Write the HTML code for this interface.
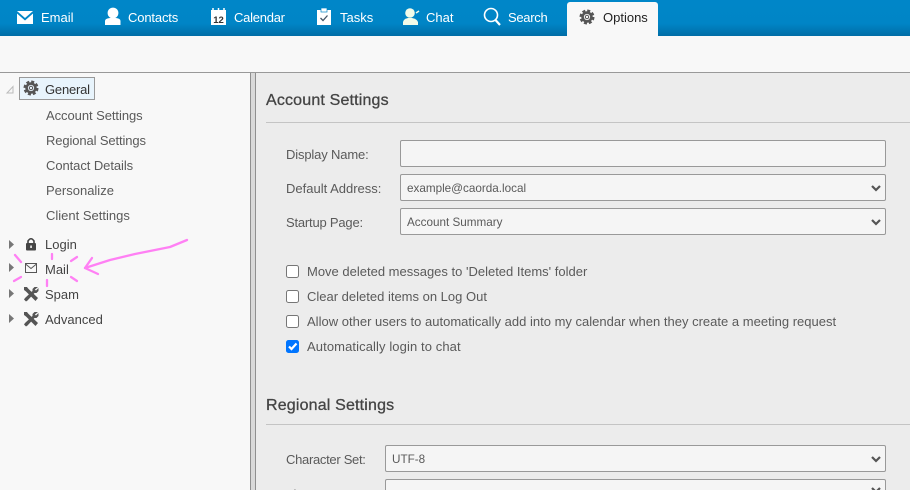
<!DOCTYPE html>
<html><head><meta charset="utf-8">
<style>
html,body{margin:0;padding:0;width:910px;height:490px;overflow:hidden;background:#f8f8f8}
body{position:relative;font-family:"Liberation Sans",sans-serif;font-size:13px;color:#5a5a5a}
.a{position:absolute}
.t{position:absolute;line-height:20px;white-space:nowrap}
.n{color:#fff;top:8px}
.h{font-size:16px;color:#444;-webkit-text-stroke:.3px #444;line-height:22px;letter-spacing:.17px}
.b{position:absolute;box-sizing:border-box;background:#f5f5f5;border:1px solid #999;border-radius:2px}
.c{position:absolute;left:286px;width:13px;height:13px;box-sizing:border-box;background:#fff;border:1px solid #767676;border-radius:2.5px}
.s{font-size:11.7px;color:#5a5a5a}
svg{position:absolute;left:0;top:0}
</style></head><body>
<div class="a" style="left:0;top:0;width:910px;height:36px;background:linear-gradient(#0086c8 0,#0085c6 65%,#006da6 100%)"></div>
<div class="a" style="left:567px;top:2px;width:91px;height:34px;background:#f8f8f8;border-radius:3px 3px 0 0"></div>
<div class="a" style="left:0;top:72px;width:910px;height:1px;background:#999"></div>
<div class="a" style="left:250px;top:73px;width:660px;height:417px;background:#ececec"></div>
<div class="a" style="left:250px;top:73px;width:6px;height:417px;box-sizing:border-box;background:#d9d9d9;border-left:1px solid #8f8f8f;border-right:1px solid #8f8f8f"></div>

<div class="t n" style="left:41px">Email</div>
<div class="t n" style="left:128px;letter-spacing:-.15px">Contacts</div>
<div class="t n" style="left:234px;letter-spacing:-.25px">Calendar</div>
<div class="t n" style="left:340px">Tasks</div>
<div class="t n" style="left:426px">Chat</div>
<div class="t n" style="left:508px;letter-spacing:-.3px">Search</div>
<div class="t" style="left:603px;top:8px;color:#222">Options</div>

<svg width="910" height="490" viewBox="0 0 910 490">
<defs>
<g id="gear"><circle r="6.3" fill="none" stroke="#555" stroke-width="2.4" stroke-dasharray="3 1.95"/><circle r="4.4" fill="none" stroke="#555" stroke-width="2.6"/><circle r="1.7" fill="none" stroke="#555" stroke-width="1"/></g>
<g id="tool" fill="#555"><path d="M1 3.5 L3.5 1 L15 12 L12.5 15 Z"/><path d="M1 1 L4 1 L6 4 L4 6 L1 4 Z"/><path d="M15 1 L11.5 1 L9.5 3 L9.5 5 L2 12 L1 13.5 L3 15.5 L4.5 14.5 L11.5 7 L13.500 7 L15.500 5 L15.500 2 L13 4.500 L11.800 3.600 Z"/></g>
<path id="ar" d="M0 0 L5 4.500 L0 9 Z" fill="#777"/>
</defs>
<!-- email -->
<path d="M17 11 L33 11 L25 18 Z" fill="#fff"/><path d="M17 13.500 L25 20.500 L33 13.500 L33 24 L17 24 Z" fill="#fff"/>
<!-- contacts -->
<circle cx="113" cy="13" r="5.400" fill="#fff"/><path d="M105 25 L105 21 Q105 18.500 110 18 L116 18 Q120.500 18.500 120.500 21 L120.500 25 Z" fill="#fff"/>
<!-- calendar -->
<rect x="211" y="10" width="15" height="15" fill="#fff"/><path d="M213 8v4M218.500 8v4M224 8v4" stroke="#fff" stroke-width="1.500"/>
<text x="218.500" y="23" font-family="Liberation Sans" font-size="9.500" font-weight="bold" text-anchor="middle" fill="#333">12</text>
<!-- tasks -->
<rect x="317" y="10" width="14" height="15" fill="#fff"/><rect x="321" y="8" width="6" height="4" fill="#fff" stroke="#0085c6" stroke-width=".7"/><path d="M320.500 18 L323 20.500 L327.500 15.500" fill="none" stroke="#456" stroke-width="1.300"/>
<!-- chat -->
<circle cx="410" cy="13" r="4.800" fill="#f2fbe8"/><path d="M403 25 L403 22 Q403.500 19 408 18 L412 18 Q417 19 418 22 L418 25 Z" fill="#f2fbe8"/><path d="M416 13 L419 11" stroke="#f2fbe8" stroke-width="1.500"/>
<!-- search -->
<circle cx="491" cy="15" r="6.500" fill="none" stroke="#fff" stroke-width="1.600"/><path d="M495.500 20 L500 25" stroke="#fff" stroke-width="2.200"/>
<!-- options gear -->
<use href="#gear" x="587" y="17"/>

<!-- tree -->
<rect x="19.500" y="77.500" width="75" height="22" fill="#e8f4fc" stroke="#999"/>
<path d="M13 86.500 L13 93 L7 93 Z" fill="none" stroke="#bbb"/>
<use href="#gear" x="31" y="88"/>
<use href="#ar" x="9" y="240"/>
<use href="#ar" x="9" y="263"/>
<use href="#ar" x="9" y="289"/>
<use href="#ar" x="9" y="314"/>
<!-- lock -->
<rect x="26" y="243" width="10" height="7.500" rx="1" fill="#444"/><path d="M28 243.500 V241 Q31 236.500 34 241 V243.500" fill="none" stroke="#444" stroke-width="1.600"/><rect x="30.300" y="245.500" width="1.500" height="2.500" fill="#fff"/>
<!-- mail -->
<rect x="25.500" y="263.500" width="11" height="9" fill="none" stroke="#555"/><path d="M25.500 264 L31 268.500 L36.500 264" fill="none" stroke="#555"/>
<use href="#tool" x="23" y="286"/>
<use href="#tool" x="23" y="311"/>

<!-- pink -->
<g fill="none" stroke="#ff80f4" stroke-width="2.300" stroke-linecap="round" stroke-linejoin="round">
<path d="M187 240 L170 247 L135 254 L110 260 L85 268"/>
<path d="M92 258 L85 268 L98 274"/>
<path d="M15 255 L21 262"/><path d="M52 254 L52 259"/><path d="M77 257 L71 261"/>
<path d="M14 281 L21 277"/><path d="M47 280 L47 286"/><path d="M71 277 L77 281"/>
</g>
<!-- section lines -->
<rect x="266" y="122" width="644" height="1" fill="#c4c4c4"/>
<rect x="266" y="424" width="644" height="1" fill="#c4c4c4"/>
</svg>

<div class="t" style="left:45px;top:80px;color:#333;letter-spacing:-.2px">General</div>
<div class="t" style="left:46px;top:106px;letter-spacing:-.06px">Account Settings</div>
<div class="t" style="left:46px;top:131px;letter-spacing:-.12px">Regional Settings</div>
<div class="t" style="left:46px;top:156px;letter-spacing:-.07px">Contact Details</div>
<div class="t" style="left:46px;top:181px">Personalize</div>
<div class="t" style="left:46px;top:206px">Client Settings</div>
<div class="t" style="left:45px;top:235px;color:#444">Login</div>
<div class="t" style="left:45px;top:260px;color:#444">Mail</div>
<div class="t" style="left:45px;top:285px;color:#444">Spam</div>
<div class="t" style="left:45px;top:310px;color:#444">Advanced</div>

<div class="t h" style="left:266px;top:90px">Account Settings</div>
<div class="t" style="left:286px;top:145px;letter-spacing:-.15px">Display Name:</div>
<div class="t" style="left:286px;top:179px">Default Address:</div>
<div class="t" style="left:286px;top:213px;letter-spacing:-.2px">Startup Page:</div>
<div class="b" style="left:400px;top:140px;width:486px;height:27px"></div>
<div class="b" style="left:400px;top:174px;width:486px;height:27px"></div>
<div class="b" style="left:400px;top:208px;width:486px;height:27px"></div>
<div class="t s" style="left:407px;top:179px">example@caorda.local</div>
<div class="t s" style="left:407px;top:213px">Account Summary</div>

<div class="c" style="top:265px"></div>
<div class="c" style="top:290px"></div>
<div class="c" style="top:315px"></div>
<div class="c" style="top:340px;background:#0075ff;border-color:#0075ff"></div>
<div class="t" style="left:307px;top:262px">Move deleted messages to 'Deleted Items' folder</div>
<div class="t" style="left:307px;top:287px">Clear deleted items on Log Out</div>
<div class="t" style="left:307px;top:312px;letter-spacing:.01px">Allow other users to automatically add into my calendar when they create a meeting request</div>
<div class="t" style="left:307px;top:337px;letter-spacing:.1px">Automatically login to chat</div>

<div class="t h" style="left:266px;top:395px">Regional Settings</div>
<div class="t" style="left:286px;top:450px;letter-spacing:-.3px">Character Set:</div>
<div class="t" style="left:286px;top:485px">Time Zone:</div>
<div class="b" style="left:385px;top:445px;width:501px;height:27px"></div>
<div class="b" style="left:385px;top:479px;width:501px;height:27px"></div>
<div class="t s" style="left:392px;top:450px">UTF-8</div>

<svg width="910" height="490" viewBox="0 0 910 490">
<path d="M289 346.500 L291.500 349 L296.500 343.500" fill="none" stroke="#fff" stroke-width="2.200"/>
<g fill="none" stroke="#555" stroke-width="2.200">
<path d="M872 186 L876 190 L880 186"/>
<path d="M872 220 L876 224 L880 220"/>
<path d="M872 457 L876 461 L880 457"/>
<path d="M872 488 L876 492 L880 488"/>
</g>
</svg>
</body></html>
